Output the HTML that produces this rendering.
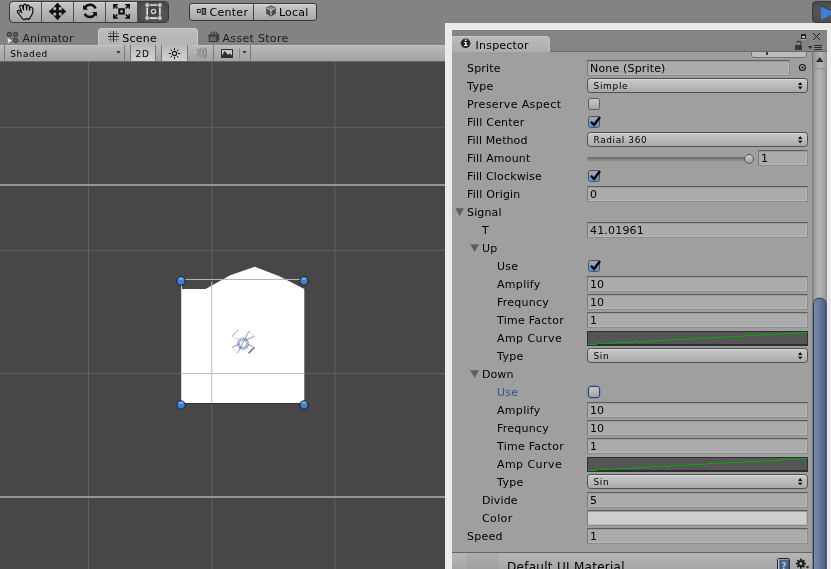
<!DOCTYPE html>
<html><head><meta charset="utf-8"><title>Unity</title>
<style>
html,body{margin:0;padding:0}
body{width:831px;height:569px;overflow:hidden;position:relative;background:#838383;font:11px "DejaVu Sans","Liberation Sans",sans-serif;color:#000}
div,svg{position:absolute;box-sizing:border-box}
/* main toolbar */
.tb{left:9px;top:1px;width:160px;height:22px;border:1px solid #3a3a3a;border-radius:4px;background:linear-gradient(#c8c8c8,#a2a2a2);overflow:hidden;box-shadow:inset 0 1px 0 #d4d4d4}
.tb i{position:absolute;top:0;width:1px;height:20px;background:#505050}
.tb .sel{left:128px;top:0;width:31px;height:20px;background:radial-gradient(ellipse at 50% 55%,#5e5e5e 0%,#565656 45%,#424242 100%)}
.pv{left:189px;top:3px;width:128px;height:18px;border:1px solid #383838;border-radius:3px;background:linear-gradient(#cacaca,#a6a6a6);box-shadow:inset 0 1px 0 #d6d6d6}
.pv i{position:absolute;left:63px;top:0;width:1px;height:16px;background:#444}
.play{left:812px;top:1px;width:40px;height:22px;border-radius:4px;background:radial-gradient(ellipse at 40% 50%,#5e5e5e,#444);border:1px solid #3a3a3a}
.t{white-space:nowrap;line-height:14px;height:14px}
/* scene */
.stab{left:98px;top:28px;width:100px;height:18px;background:linear-gradient(#bdbdbd,#b3b3b3);border-radius:4px 4px 0 0;border:1px solid #cbcbcb;border-bottom:0}
.stool{left:0;top:45px;width:445px;height:17px;background:linear-gradient(#b9b9b9,#a3a3a3);border-top:1px solid #c2c2c2;border-bottom:1px solid #686868}
.stool b{position:absolute;top:-1px;width:1px;height:16px;background:#787878}
.stool .on{top:-1px;height:16px;background:linear-gradient(#b9b9b9,#d3d3d3)}
.stool .gap{top:0;height:15px;background:linear-gradient(#a6a6a6,#969696)}
.scene{left:0;top:62px;width:445px;height:507px;background:#474747;overflow:hidden}
/* inspector window */
.win{left:445px;top:23px;width:400px;height:560px;background:#ebebeb}
.insp{left:452px;top:30px;width:375px;height:539px;background:#9f9f9f;overflow:hidden}
.ihead{left:0;top:0;width:375px;height:22px;background:#848484;border-bottom:1px solid #6a6a6a}
.itab{left:0;top:6px;width:98px;height:16px;background:linear-gradient(#bbb,#adadad);border-radius:0 4px 0 0;border-top:1px solid #c6c6c6;border-right:1px solid #c0c0c0}
.lb{white-space:nowrap;line-height:14px;height:14px}
.fd{height:16px;border:1px solid #7a7a7a;border-top-color:#5c5c5c;border-bottom-color:#8c8c8c;border-right-color:#8c8c8c;background:#ababab;box-shadow:inset 0 1px 0 #9b9b9b,inset -1px -1px 0 #b7b7b7}
.fd span{position:absolute;left:2px;top:1px;line-height:14px;white-space:nowrap}
.fd.col{background:#cecece}
.pp{width:221px;height:15px;border:1px solid #505050;border-radius:3.5px;background:linear-gradient(#cbcbcb,#a9a9a9);font-size:9px;box-shadow:inset 0 1px 0 #d8d8d8}
.pp span{position:absolute;left:5.5px;top:1px;line-height:13px;white-space:nowrap}
.pp .ud{right:4.3px;top:2.7px}
.cb{width:12px;height:12px;border:1px solid #5a5a5a;border-radius:2.5px;background:linear-gradient(#c6c6c6,#a4a4a4)}
.cb.on{background:linear-gradient(#a2a8b6 0%,#909eb9 46%,#6c97d8 54%,#6690d2 100%);border-color:#505256}
.cb.fo{border:1.5px solid #2d3f68;border-radius:3px;box-shadow:0 0 0 .45px #5a80c4}
.cv{width:221px;height:15px;border:1px solid #303030;background:#555;box-shadow:inset 0 -1px 0 #2c2c2c}
.sl{width:162px;height:5px;border-radius:3px;background:linear-gradient(#666,#8e8e8e 70%,#a0a0a0)}
.th{width:10px;height:10px;border-radius:5px;border:1px solid #555;background:linear-gradient(#cdcdcd,#a0a0a0)}
</style></head>
<body>
<div id="root" style="left:0;top:0;width:831px;height:569px;will-change:transform;overflow:hidden">
<!-- main toolbar -->
<div class="tb"><div class="sel"></div><i style="left:31px"></i><i style="left:63px"></i><i style="left:95px"></i><i style="left:127px"></i></div>
<div class="pv"><i></i>
<div class="t" style="left:19.5px;top:2px;letter-spacing:0.283px">Center</div>
<div class="t" style="left:89px;top:2px;letter-spacing:0.179px">Local</div>
</div>
<svg style="left:0;top:0" width="340" height="24" viewBox="0 0 340 24">
<!-- hand -->
<path d="M22.7 19 L17.3 11.8 Q17.2 10.4 18.4 10.4 L20.5 10.9 L21.8 12.6 L19.5 6.4 Q19.8 5.2 20.9 5.3 L22.4 5.9 L23.5 9.8 L23.4 5.4 Q23.9 4.2 24.9 4.2 Q26 4.4 26.2 5.2 L26.7 9.9 L26.9 5.7 Q27.4 5 28.2 5.1 Q29.2 5.5 29.4 6.4 L29.6 10.2 L30 7.7 Q30.6 7 31.5 7.2 Q32.7 7.6 32.8 8.5 L32.8 12.8 L31.1 16 L29 19.4 L26.9 18.6 L23.9 19.6 Z" fill="#c9c9c9" fill-opacity=".3" stroke="#0c0c0c" stroke-width="1.2" stroke-linejoin="round"/>
<path d="M18.8 12.2 L20.6 12.6" stroke="#0c0c0c" stroke-width="1" opacity=".6"/>
<!-- move -->
<g fill="#111"><path d="M57.5 2.6 L61.6 7.2 H58.9 V10 H61.7 V7.3 L66.3 11.4 L61.7 15.5 V12.8 H58.9 V15.6 H61.6 L57.5 20.2 L53.4 15.6 H56.1 V12.8 H53.3 V15.5 L48.7 11.4 L53.3 7.3 V10 H56.1 V7.2 H53.4 Z"/></g>
<!-- rotate -->
<g fill="none" stroke="#111" stroke-width="2.5"><path d="M84.6 8.3 A6 6 0 0 1 95.6 8.4"/><path d="M95.4 13.6 A6 6 0 0 1 84.6 13.8"/></g>
<path d="M83.1 4.8 V9.7 H88 Z M96.9 16.8 V11.9 H92 Z" fill="#111"/>
<!-- scale -->
<rect x="119.3" y="9.2" width="4.5" height="4.4" fill="none" stroke="#0e0e0e" stroke-width="2"/>
<g fill="#0e0e0e"><path id="sa" d="M113.1 4.1 H117.9 V5.6 H115.7 L117.9 7.8 L116.8 8.9 L114.6 6.7 V8.8 H113.1 Z"/>
<path d="M113.1 4.1 H117.9 V5.6 H115.7 L117.9 7.8 L116.8 8.9 L114.6 6.7 V8.8 H113.1 Z" transform="translate(243.1 0) scale(-1 1)"/>
<path d="M113.1 4.1 H117.9 V5.6 H115.7 L117.9 7.8 L116.8 8.9 L114.6 6.7 V8.8 H113.1 Z" transform="translate(0 22.9) scale(1 -1)"/>
<path d="M113.1 4.1 H117.9 V5.6 H115.7 L117.9 7.8 L116.8 8.9 L114.6 6.7 V8.8 H113.1 Z" transform="translate(243.1 22.9) scale(-1 -1)"/></g>
<!-- rect tool -->
<rect x="148.6" y="6.4" width="9.9" height="10.2" fill="#454545"/>
<g stroke="#e2e2e2" stroke-width="1.6"><path d="M149.8 5 H157.4 M149.8 18.1 H157.4 M147.2 7.6 V15.5 M159.9 7.6 V15.5"/></g>
<g fill="#c9c9c9"><circle cx="147.2" cy="5" r="2"/><circle cx="159.9" cy="5" r="2"/><circle cx="147.2" cy="18.1" r="2"/><circle cx="159.9" cy="18.1" r="2"/></g>
<circle cx="153.5" cy="11.4" r="2.1" fill="#4c4c4c" stroke="#d0d0d0" stroke-width="1.3"/><circle cx="153.5" cy="11.4" r=".6" fill="#333"/>
<!-- center icon -->
<rect x="197.4" y="9.5" width="2.8" height="3" fill="#c8c8c8" stroke="#222" stroke-width="1"/>
<rect x="202.2" y="8.5" width="3.4" height="5.8" fill="#777" stroke="#222" stroke-width="1"/>
<!-- local cube -->
<path d="M271 5.3 L275.8 7.8 V13.8 L271 16.5 L266.2 13.8 V7.8 Z" fill="#4a4a4a"/>
<path d="M271 6.3 L274.8 8.2 L271 10.3 L267.2 8.2 Z" fill="#8e8e8e"/>
<path d="M267.2 8.4 L271 10.5 L274.8 8.4 M271 10.5 V15.3" fill="none" stroke="#d2d2d2" stroke-width="1"/>
</svg>
<div class="play"><svg style="left:8px;top:2.6px" width="14" height="16" viewBox="0 -1 14 16"><path d="M0 0 L14 6.9 L0 13.7Z" fill="#3d7fd6"/><path d="M0 -.3 L14 6.5" stroke="#26344e" stroke-width="1" fill="none" opacity=".8"/></svg></div>
<!-- tabs -->
<div class="t" style="left:22.5px;top:32px;color:#1c1c1c;letter-spacing:.05px">Animator</div>
<div class="stab"></div>
<div class="t" style="left:122.3px;top:32px;letter-spacing:0.213px">Scene</div>
<div class="t" style="left:222.5px;top:32px;color:#1c1c1c;letter-spacing:0.313px">Asset Store</div>
<div class="stool">
<b style="left:4px"></b><b style="left:124px"></b>
<b style="left:130px"></b><div class="on" style="left:131px;width:24px"></div><b style="left:155px"></b>
<b style="left:161px"></b><div class="on" style="left:162px;width:25px"></div><b style="left:187px"></b>
<b style="left:213px"></b><b style="left:239px;background:#8a8a8a;top:2px;height:11px"></b><b style="left:250px"></b>
<div class="t" style="left:10.2px;top:1px;font-size:9px;letter-spacing:0.651px">Shaded</div>
<div class="t" style="left:135.6px;top:1px;font-size:9px;letter-spacing:.75px">2D</div>
</div>
<div class="scene">
<svg style="left:0;top:0" width="445" height="507" viewBox="0 62 445 507">
<g stroke="#606060" stroke-width="1">
<path d="M88.5 62V569 M211.75 62V569 M335 62V569 M0 127.3H445 M0 250.4H445 M0 373.5H445"/>
</g>
<path d="M0 185H445 M0 497H445" stroke="#949494" stroke-width="2"/>
<path d="M181 403 V289 H205.6 L230.2 275.3 L254.8 266.7 L279.4 276.3 L304.3 289.1 V403Z" fill="#fff"/>
<path d="M0 403.5H445" stroke="none"/>
<path d="M181 403.5H304.3" stroke="#303030" stroke-width="1"/>
<path d="M211.75 282V403 M181 373.5H304" stroke="#bcbcbc" stroke-width="1"/>
<path d="M185 279.5H300" stroke="#b4b4b4" stroke-width="1"/>
<path d="M181.5 285V403" stroke="#d4d4d4" stroke-width="1"/>
<!-- pivot gizmo -->
<circle cx="243.1" cy="343.7" r="4.6" fill="none" stroke="#d9d9d9" stroke-width="3.8"/><circle cx="243.1" cy="343.7" r="4.6" fill="none" stroke="#a9bcd8" stroke-width="2.6"/><g fill="#4477c8"><circle cx="246.3" cy="340.2" r=".65"/><circle cx="238.7" cy="344.1" r=".65"/><circle cx="240.3" cy="347.7" r=".65"/><circle cx="246.3" cy="346.1" r=".65"/></g>
<g stroke="#555" stroke-width=".7" fill="none" opacity=".85">
<path d="M232 336.6 L238.3 329.9 M249 331.1 L237.5 353.2 M254.6 336.2 L246.6 339.8 M232 347.3 L238 344.5 M253 346.5 L248.2 344.5"/>
<path d="M232 336.6 L239 339.5 M249 331.1 L254.6 336.2 M232 347.3 L237.5 353.2" stroke="#bbb"/>
<path d="M248.6 353.2 L254.6 347.3" stroke="#444" stroke-width="1.3"/>
</g>
<g fill="#3f7fd8" stroke="#1c1c1c" stroke-width="1"><circle cx="181" cy="281" r="4.2"/><circle cx="304" cy="281" r="4.2"/><circle cx="181" cy="405" r="4.2"/><circle cx="304" cy="405" r="4.2"/></g>
<g fill="#9fc0ec" opacity=".7"><ellipse cx="181" cy="278.6" rx="2.6" ry="1.2"/><ellipse cx="304" cy="278.6" rx="2.6" ry="1.2"/><ellipse cx="181" cy="402.6" rx="2.6" ry="1.2"/><ellipse cx="304" cy="402.6" rx="2.6" ry="1.2"/></g>
</svg>
</div>
<!-- inspector -->
<div class="win"></div>
<div class="insp">
<div class="ihead"><div class="itab"></div>
<div class="t" style="left:23.6px;top:9px;letter-spacing:0.197px">Inspector</div>
</div>
</div>
<div class="lb" style="left:467px;top:62px;color:#000;letter-spacing:0.183px">Sprite</div>
<div class="fd" style="left:587px;top:60px;width:203px"><span style="letter-spacing:0.166px">None (Sprite)</span></div>
<svg style="left:797.5px;top:63px" width="9" height="9" viewBox="0 0 9 9"><circle cx="4.4" cy="4.5" r="3" fill="none" stroke="#161616" stroke-width="1.1"/><circle cx="4.4" cy="4.5" r="1" fill="#161616"/></svg>
<div class="lb" style="left:467px;top:80px;color:#000;letter-spacing:0.375px">Type</div>
<div class="pp" style="left:587px;top:78px"><span style="letter-spacing:0.678px">Simple</span><svg class="ud" width="4.4" height="7.6" viewBox="0 0 4.4 7.6"><path d="M0 3.1 L2.2 0 L4.4 3.1Z M0 4.5 L2.2 7.6 L4.4 4.5Z" fill="#0c0c0c"/></svg></div>
<div class="lb" style="left:467px;top:98px;color:#000;letter-spacing:0.381px">Preserve Aspect</div>
<div class="cb" style="left:588px;top:98px"></div>
<div class="lb" style="left:467px;top:116px;color:#000;letter-spacing:0.210px">Fill Center</div>
<div class="cb on" style="left:588px;top:116px"><svg width="14" height="14" viewBox="0 0 14 14" style="left:0px;top:-3px"><path d="M1.9 7.7 L5.1 11 L11 3" stroke="#000" stroke-width="2.3" fill="none" stroke-linejoin="miter"/></svg></div>
<div class="lb" style="left:467px;top:134px;color:#000;letter-spacing:0.097px">Fill Method</div>
<div class="pp" style="left:587px;top:132px"><span style="letter-spacing:0.596px">Radial 360</span><svg class="ud" width="4.4" height="7.6" viewBox="0 0 4.4 7.6"><path d="M0 3.1 L2.2 0 L4.4 3.1Z M0 4.5 L2.2 7.6 L4.4 4.5Z" fill="#0c0c0c"/></svg></div>
<div class="lb" style="left:467px;top:152px;color:#000;letter-spacing:0.191px">Fill Amount</div>
<div class="sl" style="left:587px;top:157px"></div><div class="th" style="left:744px;top:154px"></div>
<div class="fd" style="left:758px;top:150px;width:50px"><span style="letter-spacing:0.121px">1</span></div>
<div class="lb" style="left:467px;top:170px;color:#000;letter-spacing:0.161px">Fill Clockwise</div>
<div class="cb on" style="left:588px;top:170px"><svg width="14" height="14" viewBox="0 0 14 14" style="left:0px;top:-3px"><path d="M1.9 7.7 L5.1 11 L11 3" stroke="#000" stroke-width="2.3" fill="none" stroke-linejoin="miter"/></svg></div>
<div class="lb" style="left:467px;top:188px;color:#000;letter-spacing:0.189px">Fill Origin</div>
<div class="fd" style="left:587px;top:186px;width:221px"><span style="letter-spacing:0.121px">0</span></div>
<svg style="left:455px;top:208px" width="10" height="9" viewBox="0 0 10 9"><path d="M0.3 0.2 L9 0.2 L4.65 8Z" fill="#5e5e5e"/></svg>
<div class="lb" style="left:467px;top:206px;color:#000;letter-spacing:0.155px">Signal</div>
<div class="lb" style="left:482px;top:224px;color:#000;letter-spacing:0.401px">T</div>
<div class="fd" style="left:587px;top:222px;width:221px"><span style="letter-spacing:0.184px">41.01961</span></div>
<svg style="left:470px;top:244px" width="10" height="9" viewBox="0 0 10 9"><path d="M0.3 0.2 L9 0.2 L4.65 8Z" fill="#5e5e5e"/></svg>
<div class="lb" style="left:482px;top:242px;color:#000;letter-spacing:0.103px">Up</div>
<div class="lb" style="left:497px;top:260px;color:#000;letter-spacing:0.270px">Use</div>
<div class="cb on" style="left:588px;top:260px"><svg width="14" height="14" viewBox="0 0 14 14" style="left:0px;top:-3px"><path d="M1.9 7.7 L5.1 11 L11 3" stroke="#000" stroke-width="2.3" fill="none" stroke-linejoin="miter"/></svg></div>
<div class="lb" style="left:497px;top:278px;color:#000;letter-spacing:0.303px">Amplify</div>
<div class="fd" style="left:587px;top:276px;width:221px"><span style="letter-spacing:0.121px">10</span></div>
<div class="lb" style="left:497px;top:296px;color:#000;letter-spacing:0.232px">Frequncy</div>
<div class="fd" style="left:587px;top:294px;width:221px"><span style="letter-spacing:0.121px">10</span></div>
<div class="lb" style="left:497px;top:314px;color:#000;letter-spacing:0.262px">Time Factor</div>
<div class="fd" style="left:587px;top:312px;width:221px"><span style="letter-spacing:0.121px">1</span></div>
<div class="lb" style="left:497px;top:332px;color:#000;letter-spacing:0.434px">Amp Curve</div>
<div class="cv" style="left:587px;top:331px"><svg width="219" height="13" viewBox="0 0 219 13" style="left:0;top:0" shape-rendering="crispEdges"><path d="M0 12.5 H9 M9.0 11.5 H27.3 M27.3 10.5 H45.6 M45.6 9.5 H63.9 M63.9 8.5 H82.2 M82.2 7.5 H100.5 M100.5 6.5 H118.8 M118.8 5.5 H137.1 M137.1 4.5 H155.4 M155.4 3.5 H173.7 M173.7 2.5 H192.0 M192.0 1.5 H210.3 M210.3 0.5 H219.0" stroke="#00aa00" stroke-width="1" fill="none"/></svg></div>
<div class="lb" style="left:497px;top:350px;color:#000;letter-spacing:0.375px">Type</div>
<div class="pp" style="left:587px;top:348px"><span style="letter-spacing:0.661px">Sin</span><svg class="ud" width="4.4" height="7.6" viewBox="0 0 4.4 7.6"><path d="M0 3.1 L2.2 0 L4.4 3.1Z M0 4.5 L2.2 7.6 L4.4 4.5Z" fill="#0c0c0c"/></svg></div>
<svg style="left:470px;top:370px" width="10" height="9" viewBox="0 0 10 9"><path d="M0.3 0.2 L9 0.2 L4.65 8Z" fill="#5e5e5e"/></svg>
<div class="lb" style="left:482px;top:368px;color:#000;letter-spacing:0.078px">Down</div>
<div class="lb" style="left:497px;top:386px;color:#34539a;letter-spacing:0.270px">Use</div>
<div class="cb fo" style="left:588px;top:386px"></div>
<div class="lb" style="left:497px;top:404px;color:#000;letter-spacing:0.303px">Amplify</div>
<div class="fd" style="left:587px;top:402px;width:221px"><span style="letter-spacing:0.121px">10</span></div>
<div class="lb" style="left:497px;top:422px;color:#000;letter-spacing:0.232px">Frequncy</div>
<div class="fd" style="left:587px;top:420px;width:221px"><span style="letter-spacing:0.121px">10</span></div>
<div class="lb" style="left:497px;top:440px;color:#000;letter-spacing:0.262px">Time Factor</div>
<div class="fd" style="left:587px;top:438px;width:221px"><span style="letter-spacing:0.121px">1</span></div>
<div class="lb" style="left:497px;top:458px;color:#000;letter-spacing:0.434px">Amp Curve</div>
<div class="cv" style="left:587px;top:457px"><svg width="219" height="13" viewBox="0 0 219 13" style="left:0;top:0" shape-rendering="crispEdges"><path d="M0 12.5 H9 M9.0 11.5 H27.3 M27.3 10.5 H45.6 M45.6 9.5 H63.9 M63.9 8.5 H82.2 M82.2 7.5 H100.5 M100.5 6.5 H118.8 M118.8 5.5 H137.1 M137.1 4.5 H155.4 M155.4 3.5 H173.7 M173.7 2.5 H192.0 M192.0 1.5 H210.3 M210.3 0.5 H219.0" stroke="#00aa00" stroke-width="1" fill="none"/></svg></div>
<div class="lb" style="left:497px;top:476px;color:#000;letter-spacing:0.375px">Type</div>
<div class="pp" style="left:587px;top:474px"><span style="letter-spacing:0.661px">Sin</span><svg class="ud" width="4.4" height="7.6" viewBox="0 0 4.4 7.6"><path d="M0 3.1 L2.2 0 L4.4 3.1Z M0 4.5 L2.2 7.6 L4.4 4.5Z" fill="#0c0c0c"/></svg></div>
<div class="lb" style="left:482px;top:494px;color:#000;letter-spacing:0.146px">Divide</div>
<div class="fd" style="left:587px;top:492px;width:221px"><span style="letter-spacing:0.121px">5</span></div>
<div class="lb" style="left:482px;top:512px;color:#000;letter-spacing:0.376px">Color</div>
<div class="fd col" style="left:587px;top:510px;width:221px"></div>
<div class="lb" style="left:467px;top:530px;color:#000;letter-spacing:0.224px">Speed</div>
<div class="fd" style="left:587px;top:528px;width:221px"><span style="letter-spacing:0.121px">1</span></div>
<div style="left:452px;top:552px;width:360px;height:17px;background:linear-gradient(#b5b5b5,#a6a6a6);border-top:1px solid #646464"></div>
<div class="t" style="left:507px;top:559px;font-size:12px;line-height:16px;height:16px;letter-spacing:.28px">Default UI Material</div>
<!-- tab / scene toolbar icons -->
<svg style="left:0;top:26px" width="445" height="38" viewBox="0 26 445 38">
<!-- animator icon -->
<g fill="#606060" stroke="#333" stroke-width="1"><circle cx="9.4" cy="34.4" r="2.2"/><circle cx="15.6" cy="34.4" r="2.2"/><circle cx="15.6" cy="40.4" r="2.2"/></g>
<path d="M11 39.2 L13.4 36.8" stroke="#3c3c3c" stroke-width=".8"/>
<path d="M7.7 37.9 L11.9 40.5 L7.9 43.4 Z" fill="#e6e6e6"/>
<!-- scene hash -->
<path d="M110.5 31V42 M116.5 31V42 M108 33.5H119 M108 39.5H119" stroke="#787878" stroke-width="1"/>
<path d="M113.5 31V42 M108 36.5H119" stroke="#222" stroke-width="1"/>
<!-- asset store -->
<path d="M216.9 36 L218.8 34.4 V40 L216.9 41.6 Z" fill="#474747" stroke="#333" stroke-width=".8"/>
<rect x="209.2" y="36" width="7.7" height="5.6" fill="#6a6a6a" stroke="#333" stroke-width="1"/>
<path d="M208.4 35.6 H217.2 L219 34.2 H210.4 Z" fill="#767676" stroke="#333" stroke-width=".8"/>
<path d="M211.4 34.4 Q210.6 32 212.6 31.9 Q214.2 32.3 214 34.2 Q214.2 32 215.8 31.9 Q217.6 32.3 216.8 34.4" fill="none" stroke="#3a3a3a" stroke-width="1"/>
<path d="M212.2 33.2 L213.2 33.8 M215.4 33.2 L216.2 33.8" stroke="#b0b0b0" stroke-width=".9"/>
<!-- dropdown arrows -->
<path d="M116.3 51 H120.7 L118.5 53.7 Z" fill="#333"/>
<path d="M242.3 51 H246.7 L244.5 53.7 Z" fill="#333"/>
<!-- sun -->
<circle cx="174.5" cy="53.5" r="2.1" fill="none" stroke="#1a1a1a" stroke-width="1.1"/>
<path d="M174.5 47.8V50 M174.5 57V59.2 M168.8 53.5H171 M178 53.5H180.2 M170.5 49.5L172 51 M177 56L178.5 57.5 M178.5 49.5L177 51 M172 56L170.5 57.5" stroke="#1a1a1a" stroke-width="1"/>
<!-- speaker (off) -->
<path d="M194 52.6 L200.7 48 V57.6 Z" fill="#9a9a9a" stroke="#8c8c8c" stroke-width=".7" stroke-linejoin="round"/>
<circle cx="195.6" cy="52.6" r="1.5" fill="#c0c0c0"/>
<path d="M202.3 48.8 Q204.7 52.8 202.3 56.8 M204.6 47.4 Q208.2 52.8 204.6 58.4" fill="none" stroke="#7e7e7e" stroke-width="1.3"/>
<!-- image -->
<rect x="221" y="49" width="12" height="9" fill="#2e2e2e"/>
<path d="M222 50 H232 V55.4 L229.9 53.6 L228 54.8 L224.6 51 L222 55.8 Z" fill="#c6c6c6"/>
</svg>
<!-- inspector header icons -->
<svg style="left:452px;top:30px" width="375" height="30" viewBox="452 30 375 30">
<circle cx="465.6" cy="43.3" r="4.8" fill="#262626"/>
<path d="M464.9 39.5h1.7v1.6h-1.7z M464.2 42h2.4v3h1v1h-3.6v-1h1v-2h-.8z" fill="#f2f2f2"/>
<!-- maximize -->
<path d="M801 39.5H806" stroke="#a9a9a9" stroke-width="1"/>
<rect x="801" y="34" width="5" height="5" fill="#222"/><rect x="802" y="36" width="3" height="2" fill="#bdbdbd"/>
<!-- close -->
<path d="M813 33 L820 40 M820 33 L813 40" stroke="#1e1e1e" stroke-width="1"/>
<!-- lock -->
<rect x="795" y="45" width="7" height="5" fill="#383838"/>
<path d="M800.9 45 V43.4 Q800.9 41.4 798.8 41.4 Q797 41.5 796.5 42.9" fill="none" stroke="#383838" stroke-width="1.1"/>
<!-- menu -->
<path d="M808 46 H812.6 L810.3 49 Z" fill="#2e2e2e"/>
<path d="M814 45.5H822 M814 47.5H822 M814 49.5H822" stroke="#2a2a2a" stroke-width="1"/>
</svg>
<!-- partial button at top -->
<div style="left:751px;top:48px;width:56px;height:10px;border:1px solid #747474;border-radius:3px;background:#bcbcbc;clip-path:inset(4px 0 0 0)"></div>
<div style="left:766px;top:52px;width:2px;height:3px;background:#2c2c2c;opacity:.9"></div>
<!-- scrollbar -->
<div style="left:812px;top:52px;width:15px;height:517px;background:linear-gradient(90deg,#8c8c8c,#a8a8a8 30%,#b2b2b2 55%,#9c9c9c 90%,#8e8e8e);border-left:1px solid #787878"></div>
<svg style="left:812px;top:52px" width="15" height="517" viewBox="812 52 15 517">
<path d="M816 62 H823.4 L819.7 57 Z" fill="#2a2a2a"/>
<defs><linearGradient id="sg" x1="0" x2="1" y1="0" y2="0"><stop offset="0" stop-color="#969696"/><stop offset=".45" stop-color="#b6b6b6"/><stop offset="1" stop-color="#9a9a9a"/></linearGradient>
<linearGradient id="bg" x1="0" x2="1" y1="0" y2="0"><stop offset="0" stop-color="#7e8ca6"/><stop offset=".5" stop-color="#65779a"/><stop offset="1" stop-color="#4b5e84"/></linearGradient></defs>
<path d="M813.3 580 V75 Q813.3 68.5 819.8 68.5 Q826.3 68.5 826.3 75 V580 Z" fill="url(#sg)" stroke="#8a8a8a" stroke-width="1"/>
<path d="M813.5 580 V304.5 Q813.5 298.2 819.8 298.2 Q826.1 298.2 826.1 304.5 V580 Z" fill="url(#bg)" stroke="#2c3c5c" stroke-width="1"/>
</svg>
<!-- material header icons -->
<div style="left:467px;top:553px;width:32px;height:16px;background:rgba(0,0,0,.035)"></div>
<svg style="left:770px;top:555px" width="45" height="14" viewBox="770 555 45 14">
<rect x="777.5" y="558.5" width="12" height="12" rx="1.2" fill="#b4bfce" stroke="#1e2836" stroke-width="1"/>
<rect x="780" y="559.6" width="9" height="11" fill="#4d6385"/>
<path d="M780 559.6 V570 M789 559.6 V570" stroke="#2a3850" stroke-width=".8"/>
<text x="781.6" y="568.6" font-family="DejaVu Sans" font-size="8.5" fill="#a9c8f2" font-weight="bold">?</text>
<g transform="translate(800.9 563.6)" fill="#141414">
<circle r="2.45" fill="none" stroke="#141414" stroke-width="1.8"/>
<g><rect x="-.85" y="-5" width="1.7" height="2"/><rect x="-.85" y="3" width="1.7" height="2"/><rect x="-5" y="-.85" width="2" height="1.7"/><rect x="3" y="-.85" width="2" height="1.7"/></g>
<g transform="rotate(45)"><rect x="-.85" y="-5" width="1.7" height="2"/><rect x="-.85" y="3" width="1.7" height="2"/><rect x="-5" y="-.85" width="2" height="1.7"/><rect x="3" y="-.85" width="2" height="1.7"/></g>
</g>
<path d="M805.8 566.2 H809.4 L807.6 568.6 Z" fill="#141414"/>
</svg>

</div>
</body></html>
